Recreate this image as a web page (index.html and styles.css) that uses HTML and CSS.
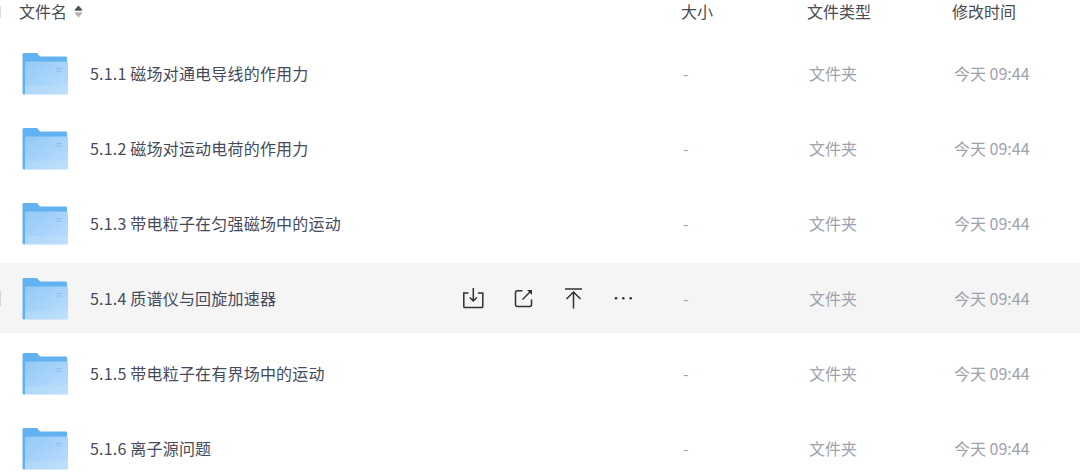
FILE: index.html

```html
<!DOCTYPE html>
<html lang="zh-CN">
<head>
  <meta charset="UTF-8" />
  <title>文件列表</title>
  <link rel="stylesheet" href="styles.css">
</head>
<body>
  <svg class="defs" width="0" height="0">
    <defs>
      <linearGradient id="folderFront" x1="0" y1="0" x2="1" y2="1">
        <stop offset="0" stop-color="#92c9f7" />
        <stop offset="1" stop-color="#bcdefc" />
      </linearGradient>
      <symbol id="folder" viewBox="0 0 46 42">
        <path d="M.5 1.500C.5 .700 1.200 0 2 0H15L18 3.500H43.500C44.500 3.500 45 4.200 45 5V12H3V41.500H2C1.200 41.500 .5 40.800 .5 40Z" fill="#62b1f0" />
        <rect x="3" y="8.500" width="43" height="33" rx="1.500" fill="url(#folderFront)" />
        <rect x="3" y="33" width="43" height="8.500" rx="1" fill="#c6e3fb" opacity=".3" />
        <rect x="34" y="15" width="6" height="1" fill="#8dbfec" />
        <rect x="34" y="17.500" width="6" height="1" fill="#8dbfec" />
      </symbol>
    </defs>
  </svg>

  <div class="file-list">
    <div class="row head">
      <span class="check"></span>
      <div class="name-head">文件名
        <svg class="sort" width="9" height="13" viewBox="0 0 9 13">
          <path d="M4.500 1.500L7.500 5H1.500Z" fill="#555" stroke="#555" stroke-width="1.500" stroke-linejoin="round" />
          <path d="M4.500 11.500L7.500 8H1.500Z" fill="#b5b5b5" stroke="#b5b5b5" stroke-width="1.500" stroke-linejoin="round" />
        </svg>
      </div>
      <div>大小</div>
      <div>文件类型</div>
      <div>修改时间</div>
    </div>

    <div class="row item">
      <svg class="folder"><use href="#folder" /></svg>
      <div class="name">5.1.1 磁场对通电导线的作用力</div>
      <div class="cell">-</div>
      <div class="cell">文件夹</div>
      <div class="cell">今天 09:44</div>
    </div>

    <div class="row item">
      <svg class="folder"><use href="#folder" /></svg>
      <div class="name">5.1.2 磁场对运动电荷的作用力</div>
      <div class="cell">-</div>
      <div class="cell">文件夹</div>
      <div class="cell">今天 09:44</div>
    </div>

    <div class="row item">
      <svg class="folder"><use href="#folder" /></svg>
      <div class="name">5.1.3 带电粒子在匀强磁场中的运动</div>
      <div class="cell">-</div>
      <div class="cell">文件夹</div>
      <div class="cell">今天 09:44</div>
    </div>

    <div class="row item hover">
      <span class="check"></span>
      <svg class="folder"><use href="#folder" /></svg>
      <div class="name">5.1.4 质谱仪与回旋加速器</div>
      <div class="actions">
        <svg width="22" height="22" viewBox="0 0 22 22" fill="none" stroke="#2f3136" stroke-width="1.500">
          <path d="M6.500 6H1.800V19.500C1.800 20.100 2.300 20.600 2.900 20.600H19.700C20.300 20.600 20.800 20.100 20.800 19.500V6H16" />
          <path d="M11.300 1V14M7.800 10.500L11.300 14L14.800 10.500" />
        </svg>
        <svg width="22" height="22" viewBox="0 0 22 22" fill="none" stroke="#2f3136" stroke-width="1.500">
          <path d="M10.500 3.700H5.500C4.300 3.700 3.500 4.500 3.500 5.700V17.500C3.500 18.700 4.300 19.500 5.500 19.500H17.500C18.700 19.500 19.500 18.700 19.500 17.500V12.500" />
          <path d="M10.500 12.500L19 4" />
          <path d="M15 3H20V8Z" fill="#2f3136" stroke="none" />
        </svg>
        <svg width="22" height="22" viewBox="0 0 22 22" fill="none" stroke="#2f3136" stroke-width="1.500">
          <path d="M3 2H20" />
          <path d="M11.500 5V21.500M4.500 12L11.500 5L18.500 12" />
        </svg>
        <svg width="22" height="22" viewBox="0 0 22 22" fill="#2f3136">
          <circle cx="4" cy="11.300" r="1.300" />
          <circle cx="11.300" cy="11.300" r="1.300" />
          <circle cx="18.700" cy="11.300" r="1.300" />
        </svg>
      </div>
      <div class="cell">-</div>
      <div class="cell">文件夹</div>
      <div class="cell">今天 09:44</div>
    </div>

    <div class="row item">
      <svg class="folder"><use href="#folder" /></svg>
      <div class="name">5.1.5 带电粒子在有界场中的运动</div>
      <div class="cell">-</div>
      <div class="cell">文件夹</div>
      <div class="cell">今天 09:44</div>
    </div>

    <div class="row item">
      <svg class="folder"><use href="#folder" /></svg>
      <div class="name">5.1.6 离子源问题</div>
      <div class="cell">-</div>
      <div class="cell">文件夹</div>
      <div class="cell">今天 09:44</div>
    </div>
  </div>
</body>
</html>
```

FILE: styles.css

```css
html, body {
  margin: 0;
  height: 476px;
  overflow: hidden;
  background: #fff;
}
body {
  font-family: "Noto Sans CJK SC", "Noto Sans", sans-serif;
  font-size: 16px;
  color: #454a5c;
}
.defs {
  display: block;
  height: 0;
}
.file-list {
  display: flex;
  flex-direction: column;
  gap: 5px;
}
.row {
  position: relative;
  display: grid;
  grid-template-columns: 681px 126px 145px 1fr;
  align-items: center;
}
.head {
  height: 22px;
  line-height: 22px;
  margin-bottom: 11px;
  color: #4a4c52;
}
.name-head {
  display: flex;
  align-items: center;
  gap: 7px;
  padding-left: 19px;
}
.check {
  position: absolute;
  left: 0;
  top: 6px;
  width: 1px;
  height: 12px;
  background: #dcdcdc;
}
.item {
  height: 70px;
}
.item .check {
  top: 28px;
  height: 15px;
  background: #d5d5d5;
}
.hover {
  background: #f5f5f5;
}
.folder {
  position: absolute;
  left: 22px;
  top: 15px;
  width: 46px;
  height: 42px;
}
.name {
  padding-left: 90px;
  letter-spacing: .2px;
}
.actions {
  position: absolute;
  left: 462px;
  top: 24px;
  display: flex;
  gap: 28px;
}
.cell {
  color: #a0a2ae;
  padding-left: 2px;
}
```
